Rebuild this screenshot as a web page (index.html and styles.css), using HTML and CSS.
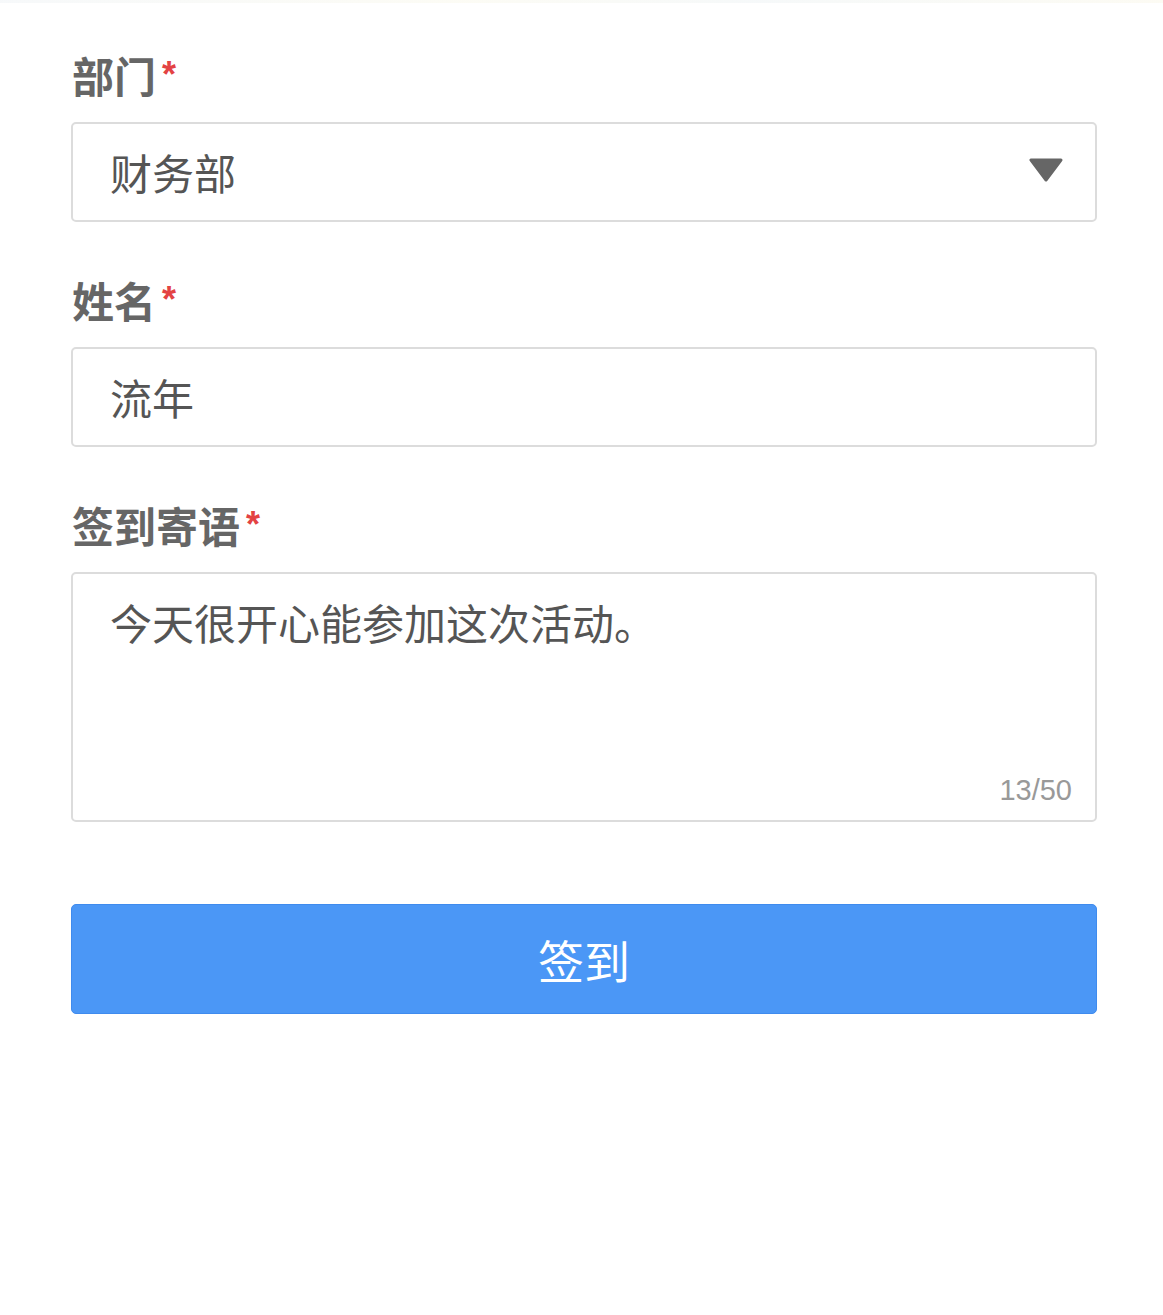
FILE: index.html
```html
<!DOCTYPE html>
<html lang="zh-CN">
<head>
<meta charset="utf-8">
<title>签到</title>
<link rel="stylesheet" href="styles.css">
</head>
<body>
<div class="topline"></div>
<form class="form">
  <div class="field">
    <div class="label">部门<span class="req">*</span></div>
    <div class="box select">
      <span class="value">财务部</span>
      <svg class="caret" width="34" height="24" viewBox="0 0 34 24"><path d="M2 2 H32 L17 22 Z" fill="#666" stroke="#666" stroke-width="3" stroke-linejoin="round"/></svg>
    </div>
  </div>
  <div class="field">
    <div class="label">姓名<span class="req">*</span></div>
    <div class="box">
      <span class="value">流年</span>
    </div>
  </div>
  <div class="field">
    <div class="label">签到寄语<span class="req">*</span></div>
    <div class="box area">
      <div class="value">今天很开心能参加这次活动。</div>
      <div class="count">13/50</div>
    </div>
  </div>
  <div class="btn">签到</div>
</form>
</body>
</html>
```
FILE: styles.css
```css
html, body {
  margin: 0;
  padding: 0;
  background: #fff;
}
body {
  font-family: "Noto Sans CJK SC", "Noto Sans", sans-serif;
  width: 1163px;
  height: 1315px;
  overflow: hidden;
}
.topline {
  height: 3px;
  background: linear-gradient(90deg, #f3f6f8, #fbfaf0 40%, #f2f6f7 65%, #fbf9ee);
  opacity: 0.7;
}
.form {
  margin-left: 71px;
  width: 1026px;
  padding-top: 43px;
}
.field {
  margin-bottom: 49px;
}
.label {
  font-size: 42px;
  line-height: 58px;
  font-weight: 700;
  color: #666;
  margin-bottom: 18px;
  padding-left: 1px;
}
.req {
  color: #e34343;
  font-family: "Liberation Sans", Arial, sans-serif;
  font-size: 36px;
  line-height: 58px;
  vertical-align: top;
  margin-left: 6px;
  font-weight: 700;
}
.box {
  box-sizing: border-box;
  height: 100px;
  border: 2px solid #dcdcdc;
  border-radius: 5px;
  display: flex;
  align-items: center;
  padding: 0 32px 0 37px;
}
.value {
  font-size: 42px;
  color: #555;
  line-height: 60px;
}
.select {
  justify-content: space-between;
}
.caret {
  display: block;
  margin-top: -4px;
}
.area {
  height: 250px;
  flex-direction: column;
  align-items: stretch;
  padding: 18px 23px 12px 37px;
}
.count {
  margin-top: auto;
  text-align: right;
  font-family: "Liberation Sans", Arial, sans-serif;
  font-size: 29px;
  color: #999;
  line-height: 36px;
}
.btn {
  margin-top: 82px;
  height: 110px;
  box-sizing: border-box;
  background: #4b97f6;
  border: 1px solid #3f8bee;
  border-radius: 5px;
  color: #fff;
  font-size: 46px;
  display: flex;
  align-items: center;
  justify-content: center;
}
```
